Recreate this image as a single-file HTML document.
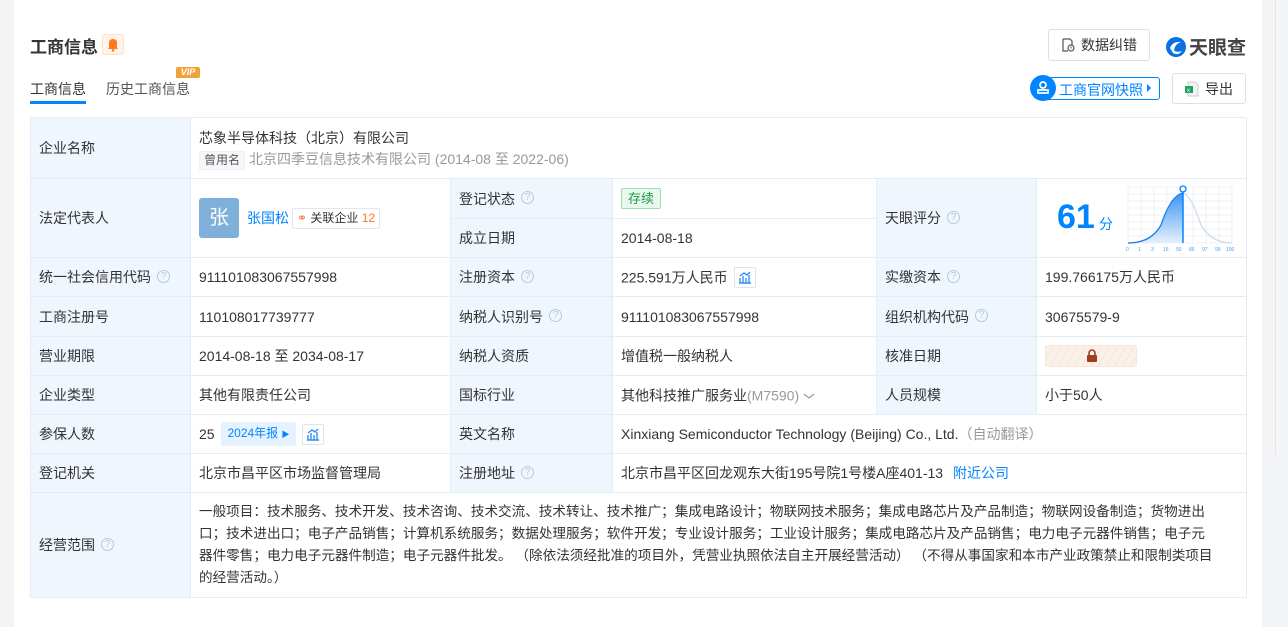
<!DOCTYPE html>
<html><head><meta charset="utf-8"><style>
*{box-sizing:border-box;margin:0;padding:0}
body{width:1288px;height:627px;background:#f3f4f6;font-family:"Liberation Sans","Noto Sans CJK SC",sans-serif;color:#333;font-size:14px;position:relative;overflow:hidden}
.card{position:absolute;left:14px;top:0;width:1248px;height:627px;background:#fff}
.sb{position:absolute;left:1275px;top:0;width:4px;height:455px;border-left:1px solid #e3e3e3;background:#f7f7f7}
.abs{position:absolute}
table{position:absolute;left:30px;top:117px;border-collapse:collapse;table-layout:fixed;width:1216px}
td{border:1px solid #e4ecf5;padding:0 8px;vertical-align:middle;line-height:20px;white-space:nowrap}
td.l{background:#f0f6fd}
.q{display:inline-block;width:13px;height:13px;border:1px solid #b6c9dc;border-radius:50%;color:#b6c9dc;font-size:10px;line-height:11px;text-align:center;margin-left:6px;vertical-align:middle;position:relative;top:-2px}
.gray{color:#999}
.blue{color:#0084ff}
.btn{position:absolute;border:1px solid #dcdfe6;border-radius:3px;background:#fff;font-size:14px;color:#333;display:flex;align-items:center;justify-content:center}
.chartbtn{display:inline-block;width:22px;height:21px;border:1px solid #dde3ea;border-radius:2px;vertical-align:middle;margin-left:6px;position:relative}
.mid{vertical-align:middle}
</style></head><body>
<div class="card"></div>
<div class="sb"></div>

<div class="abs" style="left:30px;top:33px;font-size:17px;font-weight:bold;color:#333">工商信息</div>
<div class="abs" style="left:102px;top:34px;width:22px;height:21px;background:#fff3ea;border:1px solid #ffe0c8;border-radius:3px">
<svg width="20" height="19" viewBox="0 0 20 19"><path d="M6 13 L6 8 Q6 4 10 4 Q14 4 14 8 L14 13 L15 14 L5 14 Z" fill="#ff7a1a"/><circle cx="10" cy="15.3" r="1.3" fill="#ff7a1a"/></svg></div>

<div class="abs" style="left:30px;top:79px;font-size:14px;color:#333">工商信息</div>
<div class="abs" style="left:30px;top:101px;width:56px;height:3px;background:#0084ff"></div>
<div class="abs" style="left:106px;top:79px;font-size:14px;color:#555">历史工商信息</div>
<div class="abs" style="left:176px;top:67px;width:24px;height:11px;background:#f2a23a;border-radius:2px 2px 2px 0;color:#fff;font-size:9px;font-weight:bold;font-style:italic;line-height:11px;text-align:center">VIP</div>

<div class="btn" style="left:1048px;top:29px;width:102px;height:32px"><svg width="14" height="14" viewBox="0 0 14 14" style="margin-right:6px"><path d="M2 1h7l2 2v4M2 1v12h5" fill="none" stroke="#555" stroke-width="1.2"/><circle cx="10" cy="10" r="3" fill="none" stroke="#555" stroke-width="1.2"/><path d="M10 8.5v2" stroke="#555"/></svg>数据纠错</div>
<div class="abs" style="left:1165px;top:33px;display:flex;align-items:center">
<svg width="22" height="22" viewBox="0 0 22 22"><circle cx="11" cy="11" r="10" fill="#0a72e0"/><path d="M5 12 Q8 5 16 6 Q10 8 9 14 Q11 17 17 15 Q13 20 8 17 Z" fill="#fff"/></svg>
<span style="font-size:19px;font-weight:bold;color:#444;margin-left:2px">天眼查</span></div>

<div class="abs" style="left:1040px;top:77px;width:120px;height:23px;border:1px solid #0084ff;border-radius:3px;"></div>
<div class="abs" style="left:1030px;top:75px;width:26px;height:26px;border-radius:50%;background:#0084ff"><svg width="26" height="26" viewBox="0 0 26 26"><circle cx="13" cy="10" r="3" fill="none" stroke="#fff" stroke-width="1.7"/><path d="M8 18h10v-3H8z" fill="none" stroke="#fff" stroke-width="1.7"/></svg></div>
<div class="abs" style="left:1059px;top:80px;color:#0084ff;font-size:14px">工商官网快照</div>
<div class="abs" style="left:1147px;top:84px;width:0;height:0;border-left:4px solid #0084ff;border-top:4px solid transparent;border-bottom:4px solid transparent"></div>
<div class="btn" style="left:1172px;top:73px;width:74px;height:31px"><svg width="14" height="16" viewBox="0 0 14 16" style="margin-right:6px"><path d="M3 1h7l3 3v11H3z" fill="#f3f3f3" stroke="#ccc"/><rect x="0" y="5" width="8" height="7" fill="#21a366"/><text x="2" y="11" font-size="6" fill="#fff" font-family="Liberation Sans">x</text></svg>导出</div>

<table>
<colgroup><col style="width:160px"><col style="width:260px"><col style="width:162px"><col style="width:264px"><col style="width:160px"><col style="width:210px"></colgroup>
<tr style="height:61px"><td class="l">企业名称</td><td colspan="5" style="padding-top:2px"><div>芯象半导体科技（北京）有限公司</div><div style="margin-top:1px"><span style="display:inline-block;background:#f5f7fa;border:1px solid #eef0f3;color:#555;font-size:12px;line-height:17px;padding:0 4px;margin-right:4px">曾用名</span><span class="gray">北京四季豆信息技术有限公司 (2014-08 至 2022-06)</span></div></td></tr>
<tr style="height:40px"><td class="l" rowspan="2">法定代表人</td><td rowspan="2"><span style="display:inline-block;width:40px;height:40px;background:#7fb0da;border-radius:3px;color:#fff;font-size:20px;line-height:40px;text-align:center;vertical-align:middle">张</span><span class="blue" style="margin-left:8px;vertical-align:middle">张国松</span><span style="display:inline-block;border:1px solid #e3e6ea;border-radius:2px;font-size:12px;line-height:19px;padding:0 4px;margin-left:3px;vertical-align:middle"><span style="color:#ff7a4a">⚭</span> 关联企业 <span style="color:#ff7a1a">12</span></span></td><td class="l">登记状态<span class="q">?</span></td><td><span style="display:inline-block;background:#e8f8ee;border:1px solid #9ddfb4;color:#1f9a4a;font-size:13px;line-height:19px;padding:0 6px;border-radius:2px">存续</span></td><td class="l" rowspan="2">天眼评分<span class="q">?</span></td><td rowspan="2" style="position:relative;padding:0">
<span style="position:absolute;left:20px;top:18px;font-size:34px;font-weight:bold;color:#0084ff;line-height:40px">61</span><span style="position:absolute;left:62px;top:35px;font-size:14px;color:#0084ff">分</span>
<svg style="position:absolute;left:89px;top:6px" width="108" height="68" viewBox="0 0 108 68">
<g stroke="#edf1f5" stroke-width="1"><path d="M2 2H106M2 9H106M2 16H106M2 23H106M2 30H106M2 37H106M2 44H106M2 51H106M2 58H106"/><path d="M2 2V58M15 2V58M28 2V58M41 2V58M54 2V58M67 2V58M80 2V58M93 2V58M106 2V58"/></g>
<defs><linearGradient id="g" x1="0" y1="0" x2="0" y2="1"><stop offset="0" stop-color="#3d94f5"/><stop offset="1" stop-color="#e5f0fd"/></linearGradient></defs>
<path d="M2 58 Q25 58 35 40 Q45 10 57 8 L57 58 Z" fill="url(#g)"/>
<path d="M2 58 Q25 58 35 40 Q45 10 57 8" fill="none" stroke="#1c7ff0" stroke-width="1.3"/>
<path d="M57 8 Q65 10 75 40 Q85 58 106 58" fill="none" stroke="#cfdbe6" stroke-width="1.3"/>
<path d="M57 6V58" stroke="#0084ff" stroke-width="1.5"/><circle cx="57" cy="4" r="3" fill="#fff" stroke="#0084ff" stroke-width="1.3"/>
<g fill="#4c9df5" font-size="5" font-family="Liberation Sans"><text x="0" y="66">0</text><text x="12" y="66">1</text><text x="25" y="66">3</text><text x="37" y="66">15</text><text x="50" y="66">50</text><text x="63" y="66">85</text><text x="76" y="66">97</text><text x="89" y="66">99</text><text x="100" y="66">100</text></g>
</svg></td></tr>
<tr style="height:39px"><td class="l">成立日期</td><td>2014-08-18</td></tr>
<tr style="height:39px"><td class="l">统一社会信用代码<span class="q">?</span></td><td>911101083067557998</td><td class="l">注册资本<span class="q">?</span></td><td><span class="mid">225.591万人民币</span><span class="chartbtn"><svg width="20" height="19" viewBox="0 0 20 19"><path d="M5 15V10M8 15V8M11 15V10M14 15V7M4 15h12M5 8l4-3 3 2 3-3" stroke="#2f8ef5" stroke-width="1.4" fill="none"/></svg></span></td><td class="l">实缴资本<span class="q">?</span></td><td>199.766175万人民币</td></tr>
<tr style="height:40px"><td class="l">工商注册号</td><td>110108017739777</td><td class="l">纳税人识别号<span class="q">?</span></td><td>911101083067557998</td><td class="l">组织机构代码<span class="q">?</span></td><td>30675579-9</td></tr>
<tr style="height:39px"><td class="l">营业期限</td><td>2014-08-18 至 2034-08-17</td><td class="l">纳税人资质</td><td>增值税一般纳税人</td><td class="l">核准日期</td><td><span style="display:inline-block;width:92px;height:22px;border:1px solid #f8e6d6;border-radius:2px;background:repeating-linear-gradient(120deg,#fbf1e8 0 6px,#f5e4d6 6px 7px);vertical-align:middle;position:relative"><svg style="position:absolute;left:40px;top:3px" width="12" height="14" viewBox="0 0 12 14"><path d="M3 6V4a3 3 0 0 1 6 0v2" fill="none" stroke="#a33d22" stroke-width="1.6"/><rect x="1" y="6" width="10" height="7" rx="1" fill="#a33d22"/></svg></span></td></tr>
<tr style="height:39px"><td class="l">企业类型</td><td>其他有限责任公司</td><td class="l">国标行业</td><td><span class="mid">其他科技推广服务业<span class="gray">(M7590)</span></span> <svg class="mid" width="12" height="8" viewBox="0 0 12 8"><path d="M1 2l5 4 5-4" fill="none" stroke="#999" stroke-width="1.2"/></svg></td><td class="l">人员规模</td><td>小于50人</td></tr>
<tr style="height:39px"><td class="l">参保人数</td><td><span class="mid">25</span> <span class="mid" style="display:inline-block;background:#e6f2ff;color:#0084ff;font-size:12px;line-height:22px;padding:0 6px;border-radius:2px;margin-left:3px">2024年报 <span style="font-size:8px">▶</span></span><span class="chartbtn"><svg width="20" height="19" viewBox="0 0 20 19"><path d="M5 15V10M8 15V8M11 15V10M14 15V7M4 15h12M5 8l4-3 3 2 3-3" stroke="#2f8ef5" stroke-width="1.4" fill="none"/></svg></span></td><td class="l">英文名称</td><td colspan="3">Xinxiang Semiconductor Technology (Beijing) Co., Ltd.<span class="gray">（自动翻译）</span></td></tr>
<tr style="height:39px"><td class="l">登记机关</td><td>北京市昌平区市场监督管理局</td><td class="l">注册地址<span class="q">?</span></td><td colspan="3">北京市昌平区回龙观东大街195号院1号楼A座401-13 <span class="blue" style="margin-left:6px">附近公司</span></td></tr>
<tr style="height:105px"><td class="l">经营范围<span class="q">?</span></td><td colspan="5" style="line-height:22px;font-size:13.6px">一般项目：技术服务、技术开发、技术咨询、技术交流、技术转让、技术推广；集成电路设计；物联网技术服务；集成电路芯片及产品制造；物联网设备制造；货物进出<br>口；技术进出口；电子产品销售；计算机系统服务；数据处理服务；软件开发；专业设计服务；工业设计服务；集成电路芯片及产品销售；电力电子元器件销售；电子元<br>器件零售；电力电子元器件制造；电子元器件批发。 （除依法须经批准的项目外，凭营业执照依法自主开展经营活动） （不得从事国家和本市产业政策禁止和限制类项目<br>的经营活动。）</td></tr>
</table>
</body></html>
